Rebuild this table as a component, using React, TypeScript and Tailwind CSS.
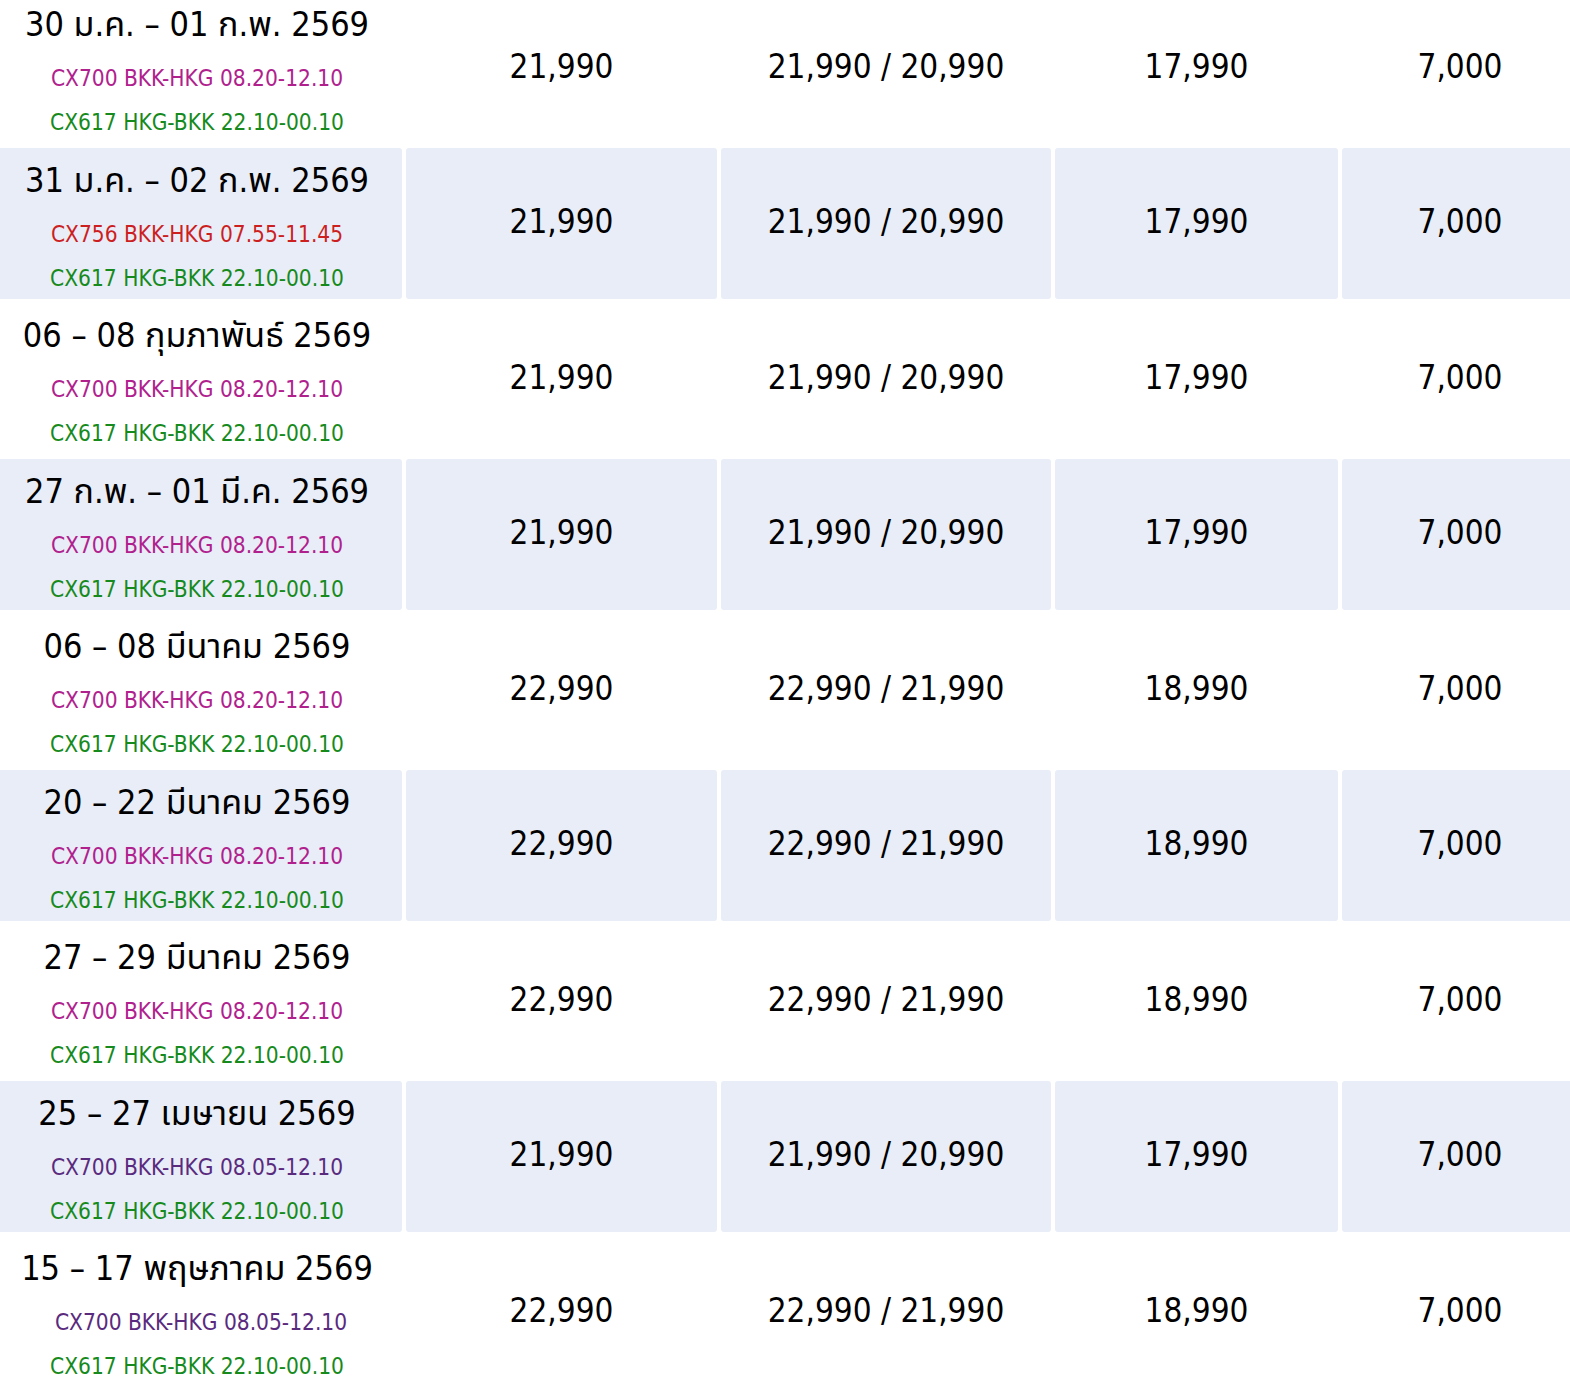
const rows = [
  { date: '30 ม.ค. – 01 ก.พ. 2569', out: 'CX700 BKK-HKG 08.20-12.10', outColor: 'text-[#b0218e]', adult: '21,990', child: '21,990 / 20,990', noBed: '17,990', single: '7,000' },
  { date: '31 ม.ค. – 02 ก.พ. 2569', out: 'CX756 BKK-HKG 07.55-11.45', outColor: 'text-[#cc1f1f]', adult: '21,990', child: '21,990 / 20,990', noBed: '17,990', single: '7,000' },
  { date: '06 – 08 กุมภาพันธ์ 2569', out: 'CX700 BKK-HKG 08.20-12.10', outColor: 'text-[#b0218e]', adult: '21,990', child: '21,990 / 20,990', noBed: '17,990', single: '7,000' },
  { date: '27 ก.พ. – 01 มี.ค. 2569', out: 'CX700 BKK-HKG 08.20-12.10', outColor: 'text-[#b0218e]', adult: '21,990', child: '21,990 / 20,990', noBed: '17,990', single: '7,000' },
  { date: '06 – 08 มีนาคม 2569', out: 'CX700 BKK-HKG 08.20-12.10', outColor: 'text-[#b0218e]', adult: '22,990', child: '22,990 / 21,990', noBed: '18,990', single: '7,000' },
  { date: '20 – 22 มีนาคม 2569', out: 'CX700 BKK-HKG 08.20-12.10', outColor: 'text-[#b0218e]', adult: '22,990', child: '22,990 / 21,990', noBed: '18,990', single: '7,000' },
  { date: '27 – 29 มีนาคม 2569', out: 'CX700 BKK-HKG 08.20-12.10', outColor: 'text-[#b0218e]', adult: '22,990', child: '22,990 / 21,990', noBed: '18,990', single: '7,000' },
  { date: '25 – 27 เมษายน 2569', out: 'CX700 BKK-HKG 08.05-12.10', outColor: 'text-[#5a2a7e]', adult: '21,990', child: '21,990 / 20,990', noBed: '17,990', single: '7,000' },
  { date: '15 – 17 พฤษภาคม 2569', out: 'CX700 BKK-HKG 08.05-12.10', outColor: 'text-[#5a2a7e] pl-[8px]', adult: '22,990', child: '22,990 / 21,990', noBed: '18,990', single: '7,000' },
]

const font = { fontFamily: '"DejaVu Sans Condensed", "DejaVu Sans", "Noto Sans Thai", "Noto Sans", sans-serif' }

function Cell({ shaded, children }: { shaded: boolean; children: React.ReactNode }) {
  return (
    <div className={`h-[151px] rounded-[3px] flex items-center justify-center ${shaded ? 'bg-[#e8edf7]' : 'bg-white'}`}>
      {children}
    </div>
  )
}

export default function App() {
  return (
    <div className="w-[1570px] h-[1387px] overflow-hidden bg-white text-black" style={font}>
      <div className="-mt-[8px] -ml-[8px] w-[1586px] grid grid-cols-[410px_311px_330px_283px_236px] gap-x-[4px] gap-y-[4.5px]">
        {rows.map((r, i) => {
          const shaded = i % 2 === 1
          return (
            <div key={i} className="contents">
              <div className={`h-[151px] rounded-[3px] flex flex-col items-center pt-[10px] ${shaded ? 'bg-[#e8edf7]' : 'bg-white'}`}>
                <div className="text-[34px] leading-[44px] whitespace-nowrap">{r.date}</div>
                <div className={`mt-[10px] text-[22.5px] leading-[44px] whitespace-nowrap ${r.outColor}`}>{r.out}</div>
                <div className="text-[22.5px] leading-[44px] whitespace-nowrap text-[#168a1c]">CX617 HKG-BKK 22.10-00.10</div>
              </div>
              <Cell shaded={shaded}><span className="text-[33px] -mt-[2px]">{r.adult}</span></Cell>
              <Cell shaded={shaded}><span className="text-[33px] -mt-[2px] whitespace-nowrap">{r.child}</span></Cell>
              <Cell shaded={shaded}><span className="text-[33px] -mt-[2px]">{r.noBed}</span></Cell>
              <Cell shaded={shaded}><span className="text-[33px] -mt-[2px]">{r.single}</span></Cell>
            </div>
          )
        })}
      </div>
    </div>
  )
}
